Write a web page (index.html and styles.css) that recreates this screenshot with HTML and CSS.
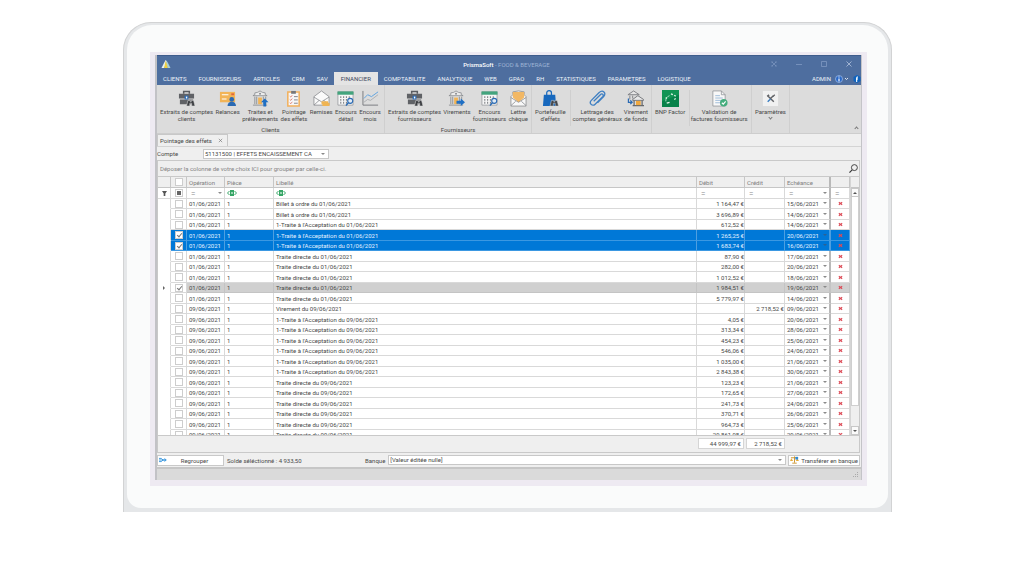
FILE: index.html
```html
<!DOCTYPE html>
<html lang="fr">
<head>
<meta charset="utf-8">
<title>PrismaSoft - FOOD &amp; BEVERAGE</title>
<link rel="stylesheet" href="styles.css">
</head>
<body>
<svg class="defs" aria-hidden="true">
  <symbol id="case" viewBox="0 0 18 18"><path d="M6 4V1.500h6V4" fill="none" stroke="#5a5c60" stroke-width="1.6"/><path d="M1 4h16v5H1zM2 10h14v5H2z" fill="#606266"/><rect x="7" y="6" width="4" height="4" fill="#2f6fb8"/><rect x="8.400" y="7" width="1.400" height="2" fill="#fff"/><path d="M9 17l1.500-6h2.500v1.500h1V11h2.500l1.500 6h-3.500v-3h-2v3z" fill="#3c3e42" stroke="#dcdcdc" stroke-width=".6"/></symbol>
  <symbol id="reminder" viewBox="0 0 18 18"><path d="M1 2h16v11H1z" fill="#f2b456"/><path d="M3 5h7M3 9.500h5" stroke="#fff" stroke-width="1.200"/><path d="M13 3.500h3v2h-3z" fill="#e2673c"/><circle cx="13.500" cy="10" r="2.500" fill="#2a6ab3"/><path d="M9 17c0-3 2-4.500 4.500-4.500S18 14 18 17z" fill="#2a6ab3"/></symbol>
  <symbol id="bank" viewBox="0 0 18 18"><path d="M1 6l2-1V3l3-.5L8.500 1 11 2.500l3 .5v2l2 1z" fill="#ececec" stroke="#85878b" stroke-width=".8"/><circle cx="8.500" cy="4" r="1" fill="#85878b"/><path d="M3 7v8M5 7v8M12 7v8M14.500 7v8M1 16h15" stroke="#8e9094"/><path d="M6.500 8h4v7h-4z" fill="#f2b456"/></symbol>
  <symbol id="clipboard" viewBox="0 0 18 18"><path d="M3 2h12v15H3z" fill="#f7f7f7" stroke="#f2b05c" stroke-width="1.600"/><path d="M6.500 1h5v3h-5z" fill="#76787c"/><path d="M9.500 7h4M9.500 10.500h4M9.500 14h4" stroke="#808288"/><path d="M5 6.500l1.200 1 1.500-2M5 10l1.200 1 1.500-2M5 13.500l1.200 1 1.500-2" fill="none" stroke="#d9695b" stroke-width=".8"/></symbol>
  <symbol id="mail" viewBox="0 0 18 18"><path d="M1 7l8-6 8 6v9H1z" fill="#fafafa" stroke="#85878b" stroke-width=".8"/><path d="M1 7.500l8 5 8-5M1 16l5.500-5M17 16l-5.500-5" fill="none" stroke="#85878b" stroke-width=".8"/></symbol>
  <symbol id="calendar" viewBox="0 0 18 18"><path d="M1 2h16v14H1z" fill="#f6f6f6" stroke="#94969a" stroke-width=".8"/><path d="M.500 1.500h17V5H.500z" fill="#43a47d"/><path d="M4 6.500v8M7 6.500v8M10 6.500v8M13 6.500v3" stroke="#85878b" stroke-width="1.200" stroke-dasharray="2 1"/><circle cx="14" cy="11.500" r="2.700" fill="#dfeaf5" stroke="#2a6ab3" stroke-width="1.200"/><path d="M12 13.500L9.500 16.500" stroke="#2a6ab3" stroke-width="1.500"/></symbol>
  <symbol id="chart" viewBox="0 0 18 18"><path d="M1 1v15h16" fill="none" stroke="#77797d"/><path d="M2 13l4-3 3 1 8-6" fill="none" stroke="#a0a3a7" stroke-width=".8"/><path d="M2 9l4-4 4 2 7-5" fill="none" stroke="#5ba2e0"/></symbol>
  <symbol id="letter" viewBox="0 0 18 18"><path d="M1 7l2-2V2l6-1 6 1v3l2 2v10H1z" fill="#f8f8f8" stroke="#85878b" stroke-width=".8"/><path d="M3 2h12v6l-6 5-6-5z" fill="#f2b865"/><path d="M1 8l8 5 8-5M1 16.500l5-4.500M17 16.500L12 12" fill="none" stroke="#85878b" stroke-width=".8"/></symbol>
  <symbol id="wallet" viewBox="0 0 18 18"><path d="M2 5h12l1 12H1z" fill="#1768bd"/><path d="M5 7V3c0-3 5-3 5 0v4" fill="none" stroke="#1768bd" stroke-width="1.300"/><path d="M8.500 17l1.500-6h2.500v1.500h1V11H16l1.500 6h-3.500v-3h-2v3z" fill="#44464a" stroke="#dcdcdc" stroke-width=".5"/></symbol>
  <symbol id="clip" viewBox="0 0 18 18"><path d="M5 12l7-7c2-2 4 0 2.500 2l-8 8c-3 3-7-1-4-4l8-8c4-4 8.500 0 5 4L9 13.500" fill="none" stroke="#3f7fc2" stroke-width="1.400"/></symbol>
  <symbol id="transfer" viewBox="0 0 18 18"><path d="M1 5l6-4 6 4zM3 6v4M6 6v3" fill="#e6e6e6" stroke="#7e8084"/><path d="M6 10l5.500-4 6 4v1H6z" fill="#e8e8e8" stroke="#737579"/><path d="M7.500 11v5M16 11v5M6 16.500h12" stroke="#66686c" stroke-width="1.300"/><path d="M9.500 11.500h5V16h-5z" fill="#f0a940"/><path d="M1.500 9v4H5M3.500 11l2 2-2 2" fill="none" stroke="#2a6ab3" stroke-width="1.300"/></symbol>
  <symbol id="bnp" viewBox="0 0 18 18"><path d="M0 0h18v18H0z" fill="#119454"/><path d="M0 12L18 5v13H0z" fill="#08824a"/><path d="M4 12c0-3 1-5 4-6" fill="none" stroke="#a9dcc0"/><path d="M9.500 4l2 .8M13 5.500l1.500 1.200M5 14l3-1M4 8l1 1M13 10l1.500-1" fill="none" stroke="#e5f5eb" stroke-width="1.400"/></symbol>
  <symbol id="valid" viewBox="0 0 18 18"><path d="M2 1h9l4 4v12H2z" fill="#f8f8f8" stroke="#8e9296" stroke-width=".8"/><path d="M11 1v4h4" fill="none" stroke="#8e9296" stroke-width=".8"/><path d="M4.500 6h5M4.500 8.500h8M4.500 11h6M4.500 13.500h5" stroke="#9dbbd9"/><circle cx="13.500" cy="13.500" r="4" fill="#45ad7d"/><path d="M11.500 13.500l1.500 1.500 2.500-3" fill="none" stroke="#fff" stroke-width="1.200"/></symbol>
  <symbol id="tools" viewBox="0 0 18 18"><path d="M1 1h16v16H1z" fill="#f1f1f1"/><path d="M6.500 6.500l6 6M12 6L9 9" stroke="#606266" stroke-width="1.500"/><path d="M5 6l2-1.500 1 1.500-2 1.500zM11 6.500l2-2 1 1-2 2z" fill="#606266"/><path d="M6 12.500L9 9.500" stroke="#3c7fc2" stroke-width="1.500"/></symbol>
  <symbol id="abc" viewBox="0 0 10 6"><path d="M3 0h4v6H3z" fill="#35a565"/><path d="M2.500 1L.5 3l2 2M7.500 1l2 2-2 2" fill="none" stroke="#35a565"/><path d="M5 2v2" stroke="#fff"/></symbol>
  <symbol id="cross" viewBox="0 0 6 6"><path d="M1 1.500l4 3M5 1.500L1 4.500" stroke="#dc4a56" stroke-width="1.300"/></symbol>
  <symbol id="closex" viewBox="0 0 6 6"><path d="M1 1l4 4M5 1L1 5" stroke="currentColor" stroke-width=".8"/></symbol>
</svg>

<main class="device">
 <div class="bezel">
  <div class="screen">
   <div class="app">
    <header class="top">
      <div class="titlebar">
        <svg class="logo" viewBox="0 0 10 10"><path d="M4.500 0L6 1.500 3 9H0z" fill="#e8f1f4"/><path d="M4.500 1L7 5v4H3z" fill="#f1cf3c"/><path d="M5 1.500L6.500 2 10 9H7z" fill="#a9ced5"/></svg>
        <h1><b>PrismaSoft</b> - FOOD &amp; BEVERAGE</h1>
        <div class="window-buttons">
          <button aria-label="Plein écran"><svg viewBox="0 0 6 6"><path d="M1 1l4 4M5 1L1 5M1 0v2M5 0v2M1 4v2M5 4v2" stroke="currentColor" stroke-width=".6"/></svg></button>
          <button aria-label="Réduire"><svg viewBox="0 0 6 6"><path d="M0 3.500h6" stroke="currentColor" stroke-width=".7"/></svg></button>
          <button aria-label="Agrandir"><svg viewBox="0 0 6 6"><path d="M.5.5h5v5h-5z" fill="none" stroke="currentColor" stroke-width=".7"/></svg></button>
          <button aria-label="Fermer"><svg viewBox="0 0 6 6"><path d="M.5.5l5 5M5.500.5l-5 5" stroke="#b4c4de" stroke-width=".8"/></svg></button>
        </div>
      </div>
      <nav class="menu">
        <a href="#">CLIENTS</a><a href="#">FOURNISSEURS</a><a href="#">ARTICLES</a><a href="#">CRM</a><a href="#">SAV</a><a href="#" class="active" aria-current="page">FINANCIER</a><a href="#">COMPTABILITE</a><a href="#">ANALYTIQUE</a><a href="#">WEB</a><a href="#">GPAO</a><a href="#">RH</a><a href="#">STATISTIQUES</a><a href="#">PARAMETRES</a><a href="#">LOGISTIQUE</a>
        <div class="user"><span>ADMIN</span>
          <button aria-label="Informations"><svg class="info" viewBox="0 0 14 8"><circle cx="4" cy="4" r="3.500" fill="#2867c6" stroke="#9db8e2" stroke-width=".8"/><path d="M4 1.500v1M4 3.500v3" stroke="#fff" stroke-width="1.200"/><path d="M10 3l1.500 1.500L13 3" fill="none" stroke="#fff" stroke-width=".8"/></svg></button>
          <button aria-label="Aide"><svg class="help" viewBox="0 0 8 8"><path d="M4 0l3.500 2v4L4 8 .5 6V2z" fill="#0d62bd"/><path d="M5 2c-1.500-.3-1.500 1-1.300 5M3 4h2" fill="none" stroke="#fff" stroke-width="1.100"/></svg></button>
        </div>
      </nav>
    </header>

    <section class="ribbon" aria-label="Financier">
      <div class="group clients">
        <div class="tools">
          <button><svg><use href="#case"/></svg>Extraits de comptes<br>clients</button>
          <button><svg><use href="#reminder"/></svg>Relances</button>
          <button><svg viewBox="0 0 18 18"><use href="#bank"/><path d="M13.500 9l4 4h-2.500v4.500h-3V13H9.500z" fill="#1f6fc4"/></svg>Traites et<br>prélèvements</button>
          <button><svg><use href="#clipboard"/></svg>Pointage<br>des effets</button>
          <button><svg viewBox="0 0 18 18"><use href="#mail"/><path d="M9 12h7v1.500h1.500V17H10v-2H9z" fill="#efb453"/></svg>Remises</button>
          <button><svg><use href="#calendar"/></svg>Encours<br>détail</button>
          <button><svg><use href="#chart"/></svg>Encours<br>mois</button>
        </div>
        <h2>Clients</h2>
      </div>
      <div class="group suppliers">
        <div class="tools">
          <button><svg><use href="#case"/></svg>Extraits de comptes<br>fournisseurs</button>
          <button><svg viewBox="0 0 18 18"><use href="#bank"/><path d="M9 11.500h4.500V9l4.500 4-4.500 4v-2.500H9z" fill="#1f6fc4"/></svg>Virements</button>
          <button><svg><use href="#calendar"/></svg>Encours<br>fournisseurs</button>
          <button><svg><use href="#letter"/></svg>Lettre<br>chèque</button>
        </div>
        <h2>Fournisseurs</h2>
      </div>
      <div class="group mixed">
        <div class="tools">
          <button class="split"><svg><use href="#wallet"/></svg>Portefeuille<br>d'effets</button>
          <button><svg><use href="#clip"/></svg>Lettrage des<br>comptes généraux</button>
          <button><svg><use href="#transfer"/></svg>Virement<br>de fonds</button>
        </div>
      </div>
      <div class="group factor">
        <div class="tools">
          <button class="split"><svg><use href="#bnp"/></svg>BNP Factor</button>
          <button class="grow"><svg><use href="#valid"/></svg>Validation de<br>factures fournisseurs</button>
        </div>
      </div>
      <div class="group settings">
        <div class="tools"><button><svg><use href="#tools"/></svg>Paramètres<br><span class="chevron"></span></button></div>
      </div>
      <button class="collapse" aria-label="Réduire le ruban"><span class="chevron up"></span></button>
    </section>

    <div class="tabs"><a href="#" class="tab">Pointage des effets</a><button class="tab-close" aria-label="Fermer l'onglet"><svg><use href="#closex"/></svg></button></div>

    <section class="workspace">
      <div class="account">
        <label for="compte">Compte</label>
        <span class="combo"><select id="compte"><option>51131500 | EFFETS ENCAISSEMENT CA</option></select></span>
      </div>

      <div class="grid">
        <div class="grouping"><span>Déposer la colonne de votre choix ICI pour grouper par celle-ci.</span>
          <button aria-label="Rechercher"><svg class="search" viewBox="0 0 10 10"><circle cx="6" cy="4" r="3.300" fill="none" stroke="#333"/><path d="M3.500 6.500L.5 9.500" stroke="#333" stroke-width="1.300"/></svg></button></div>
        <div class="pane">
          <table>
            <colgroup><col class="c-mark"><col class="c-check"><col class="c-op"><col class="c-piece"><col><col class="c-debit"><col class="c-credit"><col class="c-due"><col class="c-del"></colgroup>
            <thead>
              <tr><th></th><th class="mid"><input type="checkbox" aria-label="Tout sélectionner"></th><th>Opération</th><th>Pièce</th><th>Libellé</th><th>Débit</th><th>Crédit</th><th>Echéance</th><th></th></tr>
              <tr class="filter"><td class="mid"><svg class="funnel" viewBox="0 0 6 6"><path d="M0 0h6L4 3v3H2V3z" fill="#555"/></svg></td><td class="mid"><input type="checkbox" class="partial" aria-label="Filtre de sélection"></td><td><div class="drop eq">=</div></td><td><svg class="abc"><use href="#abc"/></svg></td><td><svg class="abc"><use href="#abc"/></svg></td><td class="eq">=</td><td class="eq">=</td><td><div class="drop eq">=</div></td><td class="eq">=</td></tr>
            </thead>
            <tbody id="rows"></tbody>
          </table>
          <div class="scroll">
            <div class="corner"></div>
            <button class="arrow up" aria-label="Monter"></button>
            <div class="thumb"></div>
            <button class="arrow" aria-label="Descendre"></button>
          </div>
        </div>
        <div class="totals"><output>44 999,97 €</output><output>2 718,52 €</output></div>
      </div>

      <div class="actions">
        <button class="regroup"><svg viewBox="0 0 10 6"><path d="M0 1h3l2 2h4M0 5h3l2-2M0 3h8M7 1l2 2-2 2" fill="none" stroke="#2b8fdb" stroke-width="1.100"/></svg><span>Regrouper</span></button>
        <span class="balance">Solde séléctionné : 4 933,50</span>
        <label for="banque">Banque</label>
        <span class="combo bank"><select id="banque"><option>[Valeur éditée nulle]</option></select></span>
        <button class="send"><svg viewBox="0 0 10 8"><path d="M5 0v7M1 1.500h8M2.500 7.500h5" stroke="#c98f25"/><path d="M0 5l1.500-3L3.500 5zM6.500 5l1.500-3L10 5z" fill="#e7ae3c"/><path d="M6 .5h3v3H6z" fill="#2f8ad6"/></svg><span>Transférer en banque</span></button>
      </div>
    </section>
    <footer class="status"><svg viewBox="0 0 6 6"><path d="M4 0h1v1H4zM2 2h1v1H2zM4 2h1v1H4zM0 4h1v1H0zM2 4h1v1H2zM4 4h1v1H4z" fill="#aaa"/></svg></footer>
   </div>
  </div>
 </div>
</main>
<script src="app.js"></script>
</body>
</html>
```
FILE: styles.css
```css
* { box-sizing: border-box; }
body { margin: 0; background: #fff; color: #484848; font: 6px/7px Roboto, "Liberation Sans", sans-serif; }
button, select, input { font: inherit; color: inherit; margin: 0; padding: 0; border: 0; background: none; border-radius: 0; }
button { display: flex; align-items: center; justify-content: center; }
h1, h2 { margin: 0; font: inherit; }
a { color: inherit; text-decoration: none; }
svg { display: block; }
.defs { display: none; }

.device { margin: 22px 132px 0 123px; padding: 2px 3px 4px; background: #e5e7e9; border: 1px solid #d2d3d4; border-bottom: 0; border-radius: 28px 28px 0 0; }
.bezel { padding: 27px 21px 22px 23px; background: #fafbfb; border-radius: 25px 25px 14px 14px; }
.screen { padding: 3px 5px 6px; background: #eeeaf2; }
.app { display: flex; flex-direction: column; background: #efefef; border-left: 2px solid #c2c2c6; border-right: 1px solid #c4c4c8; }

.top { background: #4e6e9f; color: #edf2f9; }
.titlebar { display: grid; grid-template-columns: 1fr auto 1fr; align-items: center; height: 17px; padding: 0 9px 0 4px; border-top: 1px solid #3e5c8c; }
.logo { width: 10px; height: 9px; }
.titlebar h1 { color: #9db3d4; }
.titlebar b { color: #fff; font-weight: 500; }
.window-buttons { display: flex; justify-content: flex-end; gap: 19px; color: #869fc7; }
.window-buttons svg { width: 6px; height: 6px; }
.menu { display: flex; height: 13px; align-items: stretch; }
.menu a { padding: 3px 6px 0; }
.menu .active { padding: 3px 7px 0; background: #e4e4e4; color: #39465c; }
.user { display: flex; gap: 4px; align-items: center; margin-left: auto; }
.info { width: 14px; height: 8px; }
.help { width: 8px; height: 8px; }

.ribbon { display: flex; height: 49px; background: #dcdcdc; border-bottom: 1px solid #cdcdcd; }
.group { display: flex; flex-direction: column; justify-content: space-between; border-right: 1px solid #cfcfcf; padding: 5px 3px 0; }
.group h2 { text-align: center; line-height: 6px; }
.tools { display: flex; justify-content: space-between; align-items: flex-start; }
.tools button { display: block; text-align: center; line-height: 7px; white-space: nowrap; }
.tools svg { width: 17px; height: 17px; margin: 0 auto 1px; }
.clients { width: 228px; }
.suppliers { width: 147px; }
.mixed { width: 120px; }
.factor { width: 100px; }
.settings { width: 38px; }
.settings .tools { justify-content: center; }
.tools .split { display: flex; flex-direction: column; justify-content: flex-start; height: 36px; padding-right: 4px; border-right: 1px solid #cfcfcf; }
.tools .grow { flex: 1; }
.chevron { display: block; width: 3px; height: 3px; margin: 1px auto; border: solid #777; border-width: 0 1px 1px 0; rotate: 45deg; }
.chevron.up { rotate: 225deg; margin: 0; }
.collapse { margin: auto 3px 3px auto; }

.tabs { display: flex; align-self: flex-start; align-items: center; height: 12px; padding: 0 4px 0 2px; gap: 6px; border: 1px solid #c8c8c8; border-bottom: 0; }
.tab-close { color: #777; }
.tab-close svg { width: 5px; height: 5px; }

.workspace { padding: 0 1px 0 0; border-top: 1px solid #d4d4d4; border-bottom: 2px solid #c6c6c6; }
.account { display: flex; align-items: center; height: 13px; }
.account label { width: 46px; }
.combo { display: flex; position: relative; width: 126px; height: 10px; background: #fff; border: 1px solid #c8c8c8; }
.combo select { appearance: none; flex: 1; padding: 0 10px 0 1px; line-height: 8px; }
.combo::after, .drop::after { content: ""; position: absolute; right: 3px; top: 3px; border: 2px solid transparent; border-top-color: #8a8a8a; border-bottom: 0; }

.grid { border: 1px solid #c9c9c9; }
.grouping { display: flex; align-items: center; justify-content: space-between; height: 15px; padding: 0 1px 0 2px; color: #858585; }
.search { width: 9px; height: 9px; }
.pane { display: flex; height: 260px; overflow: hidden; background: #fff; border-top: 1px solid #c9c9c9; border-bottom: 1px solid #c9c9c9; }
table { flex: 1; width: 100%; min-width: 0; table-layout: fixed; border-collapse: separate; border-spacing: 0; align-self: flex-start; }
.c-mark { width: 13px; }
.c-check { width: 16px; }
.c-op { width: 38px; }
.c-piece { width: 49px; }
.c-debit { width: 48px; }
.c-credit { width: 40px; }
.c-due { width: 46px; }
.c-del { width: 19px; }
th, td { padding: 0 1px 0 2px; height: 10px; text-align: left; font-weight: 400; line-height: 9px; white-space: nowrap; border: solid #d9d9d9; border-width: 0 1px 1px 0; }
th { height: 11px; background: #efefef; color: #808080; border-color: #c6c6c6; }
.filter td { height: 11px; }
tbody tr:nth-child(even) td { height: 11px; }
tbody td:first-child { border-bottom-color: transparent; }
th:nth-child(8), td:nth-child(8) { border-right: 2px solid #b9b9b9; }
.num { text-align: right; padding: 0; }
.mid { padding: 0; text-align: center; }
.mid svg { margin: 0 auto; }
.eq { color: #888; font-size: 8px; }
td.eq { padding-left: 4px; }
.drop { position: relative; }
.drop.eq { padding-left: 2px; }
.drop::after { right: 1px; }
.abc { width: 10px; height: 6px; }
.funnel { width: 5px; height: 5px; }
.cross { width: 5px; height: 5px; }
.mid button { margin: 0 auto; }
.marker { display: block; width: 0; margin: 0 auto; border: 2px solid transparent; border-left-color: #666; border-right: 0; }
input[type=checkbox] { appearance: none; display: block; position: relative; width: 8px; height: 8px; margin: 0 auto; background: #fff; border: 1px solid #cdcdcd; }
input:checked::after { content: ""; position: absolute; left: 2px; top: 0; width: 2px; height: 4px; border: solid #777; border-width: 0 1px 1px 0; rotate: 40deg; }
input.partial::after { content: ""; position: absolute; inset: 1px; background: #666; }
.selected td:not(:first-child) { background: #0078d7; color: #e4f2ff; border-right-color: #4e9fe0; border-bottom-color: #3b98e2; }
.selected .drop::after { border-top-color: #2f6190; }
.current td:nth-child(n+3) { background: #d0d0d0; border-color: #c4c4c4; }

.scroll { display: flex; flex-direction: column; width: 9px; background: #efefef; border-left: 1px solid #d5d5d5; }
.corner { height: 11px; border-bottom: 1px solid #c6c6c6; }
.arrow { height: 9px; background: #fafafa; border: 1px solid #c8c8c8; }
.arrow::after { content: ""; border: 2px solid transparent; border-top-color: #555; border-bottom: 0; }
.arrow.up::after { rotate: 180deg; }
.thumb { height: 209px; margin-bottom: auto; background: #fff; border: 1px solid #cfcfcf; border-top: 0; }
.totals { display: flex; justify-content: flex-end; gap: 2px; height: 16px; padding: 2px 74px 3px 0; }
.totals output { width: 46px; padding: 0 2px; line-height: 9px; text-align: right; background: #fff; border: 1px solid #d5d5d5; }
.totals output + output { width: 39px; }

.actions { display: flex; align-items: center; height: 14px; }
.actions button { height: 11px; background: #fff; border: 1px solid #c9c9c9; }
.regroup { width: 67px; padding: 0 1px; }
.regroup svg { width: 8px; height: 6px; }
.regroup span { flex: 1; }
.balance { margin: 0 auto 0 3px; }
.bank { width: auto; flex: 0 0 398px; margin: 0 2px 0 3px; }
.send { gap: 2px; padding: 0 1px; }
.send svg { width: 9px; height: 8px; }
.status { display: flex; align-items: flex-end; justify-content: flex-end; height: 11px; padding: 2px; background: #dadada; }
.status svg { width: 6px; height: 6px; }
```
FILE: app.js
```javascript
const A = "01/06/2021", B = "09/06/2021";
const acc = "1-Traite à l'Acceptation du ", dir = "Traite directe du ";
// operation date, label, debit, credit, due date, state
const data = [
  [A, "Billet à ordre du ", "1 164,47 €", "", "15/06/2021"],
  [A, "Billet à ordre du ", "3 696,89 €", "", "14/06/2021"],
  [A, acc, "612,52 €", "", "14/06/2021"],
  [A, acc, "1 265,25 €", "", "20/06/2021", "selected"],
  [A, acc, "1 683,74 €", "", "16/06/2021", "selected"],
  [A, dir, "87,90 €", "", "17/06/2021"],
  [A, dir, "282,00 €", "", "20/06/2021"],
  [A, dir, "1 012,52 €", "", "18/06/2021"],
  [A, dir, "1 984,51 €", "", "19/06/2021", "current"],
  [A, dir, "5 779,97 €", "", "14/06/2021"],
  [B, "Virement du ", "", "2 718,52 €", "09/06/2021"],
  [B, acc, "4,05 €", "", "20/06/2021"],
  [B, acc, "313,34 €", "", "28/06/2021"],
  [B, acc, "454,23 €", "", "25/06/2021"],
  [B, acc, "546,06 €", "", "24/06/2021"],
  [B, acc, "1 035,00 €", "", "21/06/2021"],
  [B, acc, "2 843,38 €", "", "30/06/2021"],
  [B, dir, "123,23 €", "", "21/06/2021"],
  [B, dir, "172,65 €", "", "27/06/2021"],
  [B, dir, "241,73 €", "", "24/06/2021"],
  [B, dir, "370,71 €", "", "26/06/2021"],
  [B, dir, "964,73 €", "", "25/06/2021"],
  [B, dir, "29 861,98 €", "", "29/06/2021"]
];
document.getElementById("rows").innerHTML = data.map(([op, label, debit, credit, due, state = ""], i) => `
<tr class="${state}">
  <td class="mid">${state === "current" ? '<span class="marker"></span>' : ""}</td>
  <td class="mid"><input type="checkbox" aria-label="Sélectionner la ligne ${i + 1}" ${state ? "checked" : ""}></td>
  <td>${op}</td><td>1</td><td>${label}${op}</td>
  <td class="num">${debit}</td><td class="num">${credit}</td>
  <td><div class="drop">${due}</div></td>
  <td class="mid"><button aria-label="Supprimer la ligne ${i + 1}"><svg class="cross"><use href="#cross"/></svg></button></td>
</tr>`).join("");
```
